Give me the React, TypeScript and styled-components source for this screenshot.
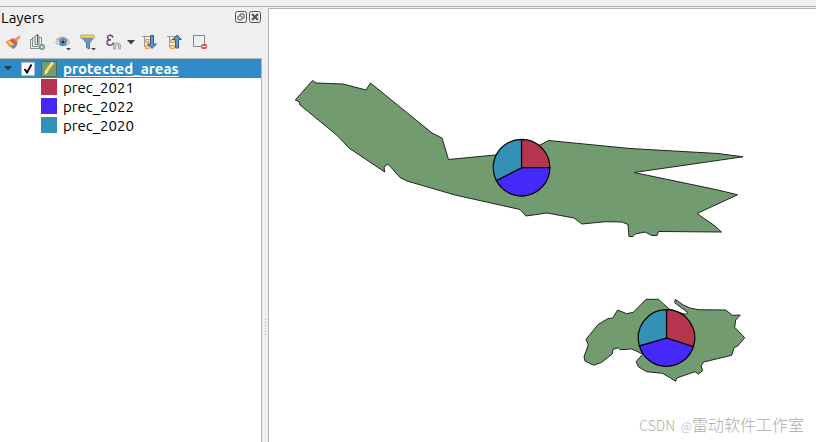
import React, { useState } from "react";
import styled, { createGlobalStyle } from "styled-components";

const colors = {
  window: "#efefef",
  line: "#b4b4b4",
  selection: "#308cc6",
  land: "#729b6f",
  prec2020: "#3590b5",
  prec2021: "#b5354f",
  prec2022: "#4529f8",
};

const GlobalStyle = createGlobalStyle`
  * { box-sizing: border-box; }
  body {
    margin: 0;
    background: ${colors.window};
    color: #000;
    font: 15px/19px Ubuntu, "Noto Sans", sans-serif;
  }
`;

const Window = styled.div`
  display: flex;
  flex-direction: column;
  height: 100vh;
  overflow: hidden;
`;

const TopEdge = styled.div`
  flex: none;
  height: 7px;
  border-bottom: 1px solid ${colors.line};
`;

const Workspace = styled.div`
  display: flex;
  flex: 1;
  min-height: 0;
`;

const LayersPanel = styled.section`
  display: flex;
  flex-direction: column;
  flex: none;
  width: 262px;
`;

const PanelHeader = styled.header`
  display: flex;
  align-items: center;
  justify-content: space-between;
  height: 20px;
  padding: 0 1px;
`;

const PanelTitle = styled.h1`
  margin: 0;
  font-size: 15px;
  font-weight: 400;
`;

const PlainButton = styled.button`
  display: flex;
  align-items: center;
  justify-content: center;
  margin: 0;
  padding: 0;
  border: 0;
  background: none;
  color: inherit;
`;

const HeaderButtons = styled.div`
  display: flex;
  gap: 2px;
`;

const HeaderButton = styled(PlainButton)`
  width: 12px;
  height: 12px;
`;

const Toolbar = styled.div`
  display: flex;
  align-items: center;
  height: 31px;
  padding: 0 0 1px 1px;
`;

const ToolButton = styled(PlainButton)<{ $narrow?: boolean }>`
  width: ${(p) => (p.$narrow ? 13 : 25)}px;
  height: 24px;
  padding-right: ${(p) => (p.$narrow ? 3 : 1)}px;
`;

const Tree = styled.ul`
  flex: 1;
  margin: 0;
  padding: 0;
  list-style: none;
  background: #fff;
  border: solid ${colors.line};
  border-width: 1px 1px 0 0;
`;

const LayerRow = styled.li`
  display: flex;
  align-items: center;
  height: 19px;
  background: ${colors.selection};
  color: #fff;
`;

const Expander = styled(PlainButton)`
  width: 21px;
  height: 19px;
  padding-right: 5px;
`;

const LayerLabel = styled.label`
  display: flex;
  align-items: center;
`;

const Check = styled.input`
  appearance: none;
  width: 14px;
  height: 14px;
  margin: 0 6px 0 0;
  border: 1px solid #b9b9b9;
  border-radius: 1px;
  background: #fff;
  &:checked {
    background: #fff url("data:image/svg+xml,%3Csvg xmlns='http://www.w3.org/2000/svg' viewBox='0 0 12 12'%3E%3Cpath d='M2.5 6 5 9.500 9.500 1.500' fill='none' stroke='black' stroke-width='1.800'/%3E%3C/svg%3E");
  }
`;

const LayerName = styled.span`
  margin-left: 6px;
  font-weight: 700;
  text-decoration: underline;
  text-decoration-thickness: 1px;
  text-underline-offset: 2px;
`;

const LegendRow = styled.li`
  display: flex;
  align-items: flex-start;
  gap: 6px;
  height: 19px;
  padding: 1px 0 0 41px;
  line-height: 17px;
`;

const Swatch = styled.span<{ $color: string }>`
  width: 16px;
  height: 16px;
  background: ${(p) => p.$color};
`;

const Splitter = styled.div`
  display: flex;
  flex: none;
  align-items: center;
  justify-content: center;
  width: 6px;
  padding-top: 206px;
`;

const MapCanvas = styled.main`
  position: relative;
  flex: 1;
  min-width: 0;
  margin-top: 1px;
  background: #fff;
  border: solid ${colors.line};
  border-width: 1px 0 0 1px;
  overflow: hidden;
`;

const MapDrawing = styled.svg`
  display: block;
  width: 100%;
  height: 100%;
`;

const Watermark = styled.span`
  position: absolute;
  right: 12px;
  bottom: 4px;
  display: flex;
  align-items: baseline;
  color: #adadad;
  font: 300 16px/24px "Noto Sans CJK SC", sans-serif;
`;

const WatermarkBrand = styled.span`
  margin-right: 6px;
  font-size: 14px;
`;

const WatermarkAt = styled.span`
  font-size: 12px;
`;

const DropMark = () => <path d="M13 16h5l-2.500 2.500z" fill="#4b4b4b" />;

const Icon = ({ children }: { children: React.ReactNode }) => (
  <svg width="20" height="20" viewBox="0 0 20 20" fill="none" aria-hidden="true">
    {children}
  </svg>
);

const StyleIcon = () => (
  <Icon>
    <path d="M11.500 7.500 16 4q1.500 0 1 1.200L13 10z" fill="#dcaa6b" stroke="#bd9058" strokeWidth=".6" />
    <path d="M2.500 9.500 6 8l7 6.500-3 2.500-4.500-3z" fill="#f39a3c" />
    <path d="m6 8.500 3-2 5.500 5.500-3 3z" fill="#cf4b4b" />
    <path d="m5 10 2-1.500 6 5.500-2 1.500z" fill="#f8d85a" />
    <path d="m8.500 7 2-1 4.500 4-1.500 2.500z" fill="#e0685a" />
    <path d="m8 14 5-2 1 1.500-3.500 3.500z" fill="#5f86c4" />
  </Icon>
);

const AddGroupIcon = () => (
  <Icon>
    <path d="M4.500 7.500h-2v9h9M6.500 5.500h-2v9h9v-9h-2" stroke="#8a8a8a" />
    <path d="M7 12.500V4.500q0-1 1-1h2q1 0 1 1v8z" fill="#e6ecef" stroke="#777" />
    <path d="M9.500 2v9.500" stroke="#3c6380" />
    <circle cx="14" cy="15" r="3" fill="#5d9e73" />
    <path d="M12.500 15h3M14 13.500v3" stroke="#fff" />
  </Icon>
);

const EyeIcon = () => (
  <Icon>
    <path d="M2.500 10.500Q9.500 2.500 17 10.500 10 17 2.500 10.500Z" fill="#e6eaed" stroke="#a0a5a9" />
    <path d="M3 8Q9 2.500 15.500 8" stroke="#999" />
    <circle cx="10" cy="10" r="3.500" fill="#6d9dc8" stroke="#527b9e" />
    <circle cx="10" cy="10" r="1.600" fill="#203448" />
    <DropMark />
  </Icon>
);

const FilterIcon = () => (
  <Icon>
    <path d="M3.500 5.500h12L11.500 11v6l-3-1.500V11z" fill="#6797c7" stroke="#4e7eaa" />
    <rect x="2.500" y="3" width="14" height="3" rx="1" fill="#f8df46" stroke="#9a9154" strokeWidth=".7" />
    <DropMark />
  </Icon>
);

const ExpressionIcon = () => (
  <Icon>
    <path d="M9.800 5.800C9.500 2.500 4.500 2.500 4.500 5.500c0 1.800 1.500 2.200 3.500 2.200-2.500 0-4 .9-4 3 0 3.200 5.800 3.300 6.500 0" stroke="#6e3f7c" strokeWidth="1.400" />
    <path d="M10.500 17v-4q0-2 3.500-2t3.500 2v4h-2v-4h-3v4z" fill="#cfcfcf" stroke="#999" strokeWidth=".8" />
  </Icon>
);

const TreeLines = () => (
  <>
    <path d="M1 4.500h8M3.500 5v10M4 9h3M4 15h3" stroke="#999" />
    <rect x="5" y="7.500" width="3" height="3" fill="#ffe39d" stroke="#ef9725" />
    <rect x="5" y="13.500" width="3" height="3" fill="#ffe39d" stroke="#ef9725" />
  </>
);

const ExpandIcon = () => (
  <Icon>
    <TreeLines />
    <path d="M9.500 3.500h3V12h3L11 16.500 6.500 12h3z" fill="#658fbd" stroke="#345f8c" />
  </Icon>
);

const CollapseIcon = () => (
  <Icon>
    <TreeLines />
    <path d="M9.500 16h3V7.500h3L11 3 6.500 7.500h3z" fill="#658fbd" stroke="#345f8c" />
  </Icon>
);

const RemoveIcon = () => (
  <Icon>
    <path d="M2.500 3.500h11v11h-11z" stroke="#858585" />
    <rect x="10" y="12" width="6" height="5" rx="2" fill="#e94c4c" />
    <path d="M11 14.500h4" stroke="#fff" />
  </Icon>
);

const ArrowIcon = () => (
  <svg width="8" height="5" viewBox="0 0 8 5" aria-hidden="true">
    <path d="M0 0h8L4 4.500z" fill="#424242" />
  </svg>
);

const FloatIcon = () => (
  <svg width="12" height="12" viewBox="0 0 12 12" fill="none" stroke="#555" aria-hidden="true">
    <rect x=".5" y=".5" width="11" height="11" rx="2" />
    <rect x="3" y="5" width="4" height="4" rx="1" />
    <path d="M5 4.500V3h4v4H7.500" />
  </svg>
);

const CloseIcon = () => (
  <svg width="12" height="12" viewBox="0 0 12 12" fill="none" stroke="#555" aria-hidden="true">
    <rect x=".5" y=".5" width="11" height="11" rx="2" />
    <path d="m3 3 6 6m0-6-6 6" strokeWidth="2" />
  </svg>
);

const PencilIcon = () => (
  <svg width="16" height="16" viewBox="0 0 16 16" aria-hidden="true">
    <path d="M.5.5h15v15H.5z" fill={colors.land} stroke="#4d6b4b" />
    <path d="m3.500 14 .7-5L9.500 1.500l3 2L7.200 11z" fill="#f1d34f" stroke="#b39a32" strokeWidth=".7" />
    <path d="m5.500 9.500 5-7" stroke="#fff0a0" />
    <path d="m3.500 14 .7-5 3 2z" fill="#eee5cc" />
    <path d="m9.300 2 1-1.500 3 2-1 1.500z" fill="#ded9d0" />
  </svg>
);

const tools = [
  { label: "Open the Layer Styling panel", icon: <StyleIcon /> },
  { label: "Add Group", icon: <AddGroupIcon /> },
  { label: "Manage Map Themes", icon: <EyeIcon /> },
  { label: "Filter Legend", icon: <FilterIcon /> },
  { label: "Filter Legend by Expression", icon: <ExpressionIcon /> },
  { label: "Expression options", icon: <ArrowIcon />, narrow: true },
  { label: "Expand All", icon: <ExpandIcon /> },
  { label: "Collapse All", icon: <CollapseIcon /> },
  { label: "Remove Layer", icon: <RemoveIcon /> },
];

const legend = [
  { name: "prec_2021", color: colors.prec2021 },
  { name: "prec_2022", color: colors.prec2022 },
  { name: "prec_2020", color: colors.prec2020 },
];

const areas = [
  "M312.500 80.500 316 83 343 84 366 90 370.500 83 432 133 442 138 448.500 159.500 495 155 540 145 548.500 140.500 630 148.500 718 153.500 743 156.800 634 172.500 718 190 737.500 194.800 697 213.500 715 226 721.500 232 658.500 231.500 657 235.500 652 235.500 645 232 635 234 633 236.500 629 236.500 628 224.500 622 222 605 221.700 582 224 574 218 547 213 526 216 520 209.500 455 195 407 181 400 177.500 388 164 384 167 384.700 172 349 148 336.700 135 300 105 299.300 101.700 295.300 100Z",
  "M646 299.300H658.300L669.300 309 680 312.700 685.500 314.300 688 312.700 674.700 302.700 675.300 299.300 683.300 305 690 308 698.300 309.700 725.700 310 732.300 315.300 740.300 315 735.700 320 734.700 327.300 744.700 337.700 737.700 346 734 347.700 731.700 355.300 703.700 362 701 366 702.700 370.700 698.300 374 695 371.700 676.700 378 675.700 381.300 669.300 377.300 662.300 373.300 646.700 371.700 638.300 366.700 636 361.700 642.700 354.300 638.300 352 631.700 349 620 349.700 618.300 347.700 613 349.300 612.300 354 601.700 362.300 593.700 365.300 585 361 584 356.700 588.300 345 586 339.300 598.300 324.300 607.700 318.700 612.700 318 617.700 310 626.700 313.700 633.300 312.300Z",
];

type PieProps = { x: number; y: number; first: number; second: number };

const RADIUS = 28.3;

// Angles are in degrees, clockwise from the top of the circle.
function Pie({ x, y, first, second }: PieProps) {
  const point = (deg: number) => {
    const a = (deg * Math.PI) / 180;
    return `${Math.sin(a) * RADIUS} ${-Math.cos(a) * RADIUS}`;
  };
  const wedge = (from: number, to: number) =>
    `M0 0L${point(from)}A${RADIUS} ${RADIUS} 0 0 1 ${point(to)}Z`;
  return (
    <g transform={`translate(${x} ${y})`} stroke="#000" strokeWidth="1.200" strokeLinejoin="round">
      <path d={wedge(0, first)} fill={colors.prec2021} />
      <path d={wedge(first, second)} fill={colors.prec2022} />
      <path d={wedge(second, 360)} fill={colors.prec2020} />
    </g>
  );
}

export default function App() {
  const [visible, setVisible] = useState(true);
  const [open, setOpen] = useState(true);

  return (
    <>
      <GlobalStyle />
      <Window>
        <TopEdge />
        <Workspace>
          <LayersPanel aria-label="Layers">
            <PanelHeader>
              <PanelTitle>Layers</PanelTitle>
              <HeaderButtons>
                <HeaderButton aria-label="Float panel"><FloatIcon /></HeaderButton>
                <HeaderButton aria-label="Close panel"><CloseIcon /></HeaderButton>
              </HeaderButtons>
            </PanelHeader>
            <Toolbar role="toolbar">
              {tools.map((t) => (
                <ToolButton key={t.label} aria-label={t.label} $narrow={t.narrow}>
                  {t.icon}
                </ToolButton>
              ))}
            </Toolbar>
            <Tree>
              <LayerRow>
                <Expander aria-label="Toggle legend" aria-expanded={open} onClick={() => setOpen(!open)}>
                  <svg width="8" height="5" viewBox="0 0 8 5" aria-hidden="true">
                    <path d="M0 0h8L4 4.500z" fill="#173f59" />
                  </svg>
                </Expander>
                <LayerLabel>
                  <Check type="checkbox" checked={visible} onChange={() => setVisible(!visible)} />
                  <PencilIcon />
                  <LayerName>protected_areas</LayerName>
                </LayerLabel>
              </LayerRow>
              {open &&
                legend.map((item) => (
                  <LegendRow key={item.name}>
                    <Swatch $color={item.color} />
                    {item.name}
                  </LegendRow>
                ))}
            </Tree>
          </LayersPanel>
          <Splitter role="separator" aria-orientation="vertical">
            <svg width="2" height="17" viewBox="0 0 2 17" aria-hidden="true">
              <path d="M1.500 0v17" stroke="#aaa" strokeDasharray="1 2" />
            </svg>
          </Splitter>
          <MapCanvas>
            <MapDrawing viewBox="269 9 547 433" preserveAspectRatio="xMinYMin meet" role="img" aria-label="Map of protected areas">
              {visible && (
                <>
                  {areas.map((d) => (
                    <path key={d} d={d} fill={colors.land} stroke="#232323" strokeLinejoin="bevel" />
                  ))}
                  <Pie x={521.5} y={167.700} first={90} second={243} />
                  <Pie x={666.5} y={338} first={108} second={254} />
                </>
              )}
            </MapDrawing>
            <Watermark>
              <WatermarkBrand>CSDN</WatermarkBrand>
              <WatermarkAt>@</WatermarkAt>
              <span>雷动软件工作室</span>
            </Watermark>
          </MapCanvas>
        </Workspace>
      </Window>
    </>
  );
}
